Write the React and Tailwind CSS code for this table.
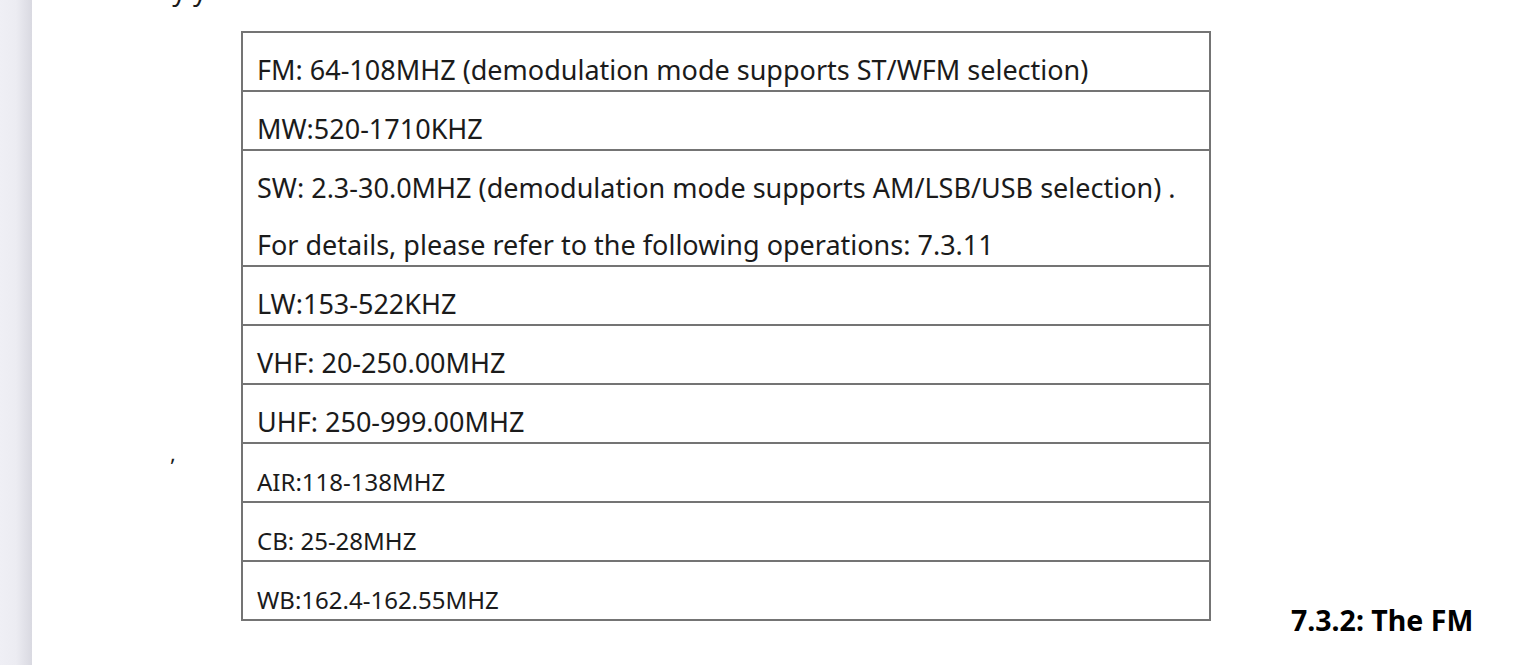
const rows = [
  { lines: ["FM: 64-108MHZ (demodulation mode supports ST/WFM selection)"] },
  { lines: ["MW:520-1710KHZ"] },
  {
    lines: [
      "SW: 2.3-30.0MHZ (demodulation mode supports AM/LSB/USB selection) .",
      "For details, please refer to the following operations: 7.3.11",
    ],
  },
  { lines: ["LW:153-522KHZ"] },
  { lines: ["VHF: 20-250.00MHZ"] },
  { lines: ["UHF: 250-999.00MHZ"] },
  { lines: ["AIR:118-138MHZ"], small: true },
  { lines: ["CB: 25-28MHZ"], small: true },
  { lines: ["WB:162.4-162.55MHZ"], small: true },
];

export default function App() {
  return (
    <div
      className="flex h-[665px] w-[1524px] overflow-hidden bg-white text-[#1b1b1b]"
      style={{ fontFamily: '"Noto Sans", "Open Sans", sans-serif' }}
    >
      {/* side gutter */}
      <div className="w-[32px] shrink-0 bg-gradient-to-r from-[#efeff5] via-[#ececf2] to-[#d9d9e1]" />

      <div className="flex min-w-0 flex-1 flex-col">
        {/* previous line, cut off at the top */}
        <div className="-mt-[25px] h-[56px] pl-[36px] text-[27px] leading-[30px] whitespace-nowrap">
          Currently you can select as follows:
        </div>

        <div className="flex items-start">
          <div className="w-[209px] shrink-0 pl-[138px] pt-[410px] text-[22px] leading-none">
            ,
          </div>

          {/* band table */}
          <div className="w-[970px] shrink-0 border-2 border-[#747474]">
            {rows.map((row, i) => (
              <div
                key={i}
                className={i < rows.length - 1 ? "border-b-2 border-[#747474]" : ""}
              >
                {row.lines.map((line) => (
                  <div
                    key={line}
                    className={
                      row.small
                        ? "h-[57px] pl-[14px] pt-[23px] text-[24px] leading-[30px] whitespace-nowrap"
                        : "h-[57px] pl-[14px] pt-[20px] text-[27px] leading-[34px] whitespace-nowrap"
                    }
                  >
                    {line}
                  </div>
                ))}
              </div>
            ))}
          </div>

          <div className="pl-[80px] pt-[571px] text-[28.5px] font-bold leading-[36px] whitespace-nowrap text-black">
            7.3.2: The FM
          </div>
        </div>
      </div>
    </div>
  );
}
